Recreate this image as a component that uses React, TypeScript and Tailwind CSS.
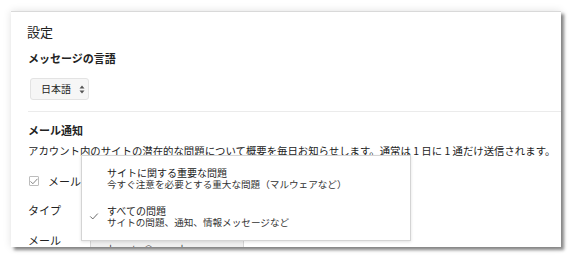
import { ChevronDown } from 'lucide-react';

const font = { fontFamily: '"Noto Sans CJK JP", "Noto Sans", sans-serif' };

function CheckMark({ className }: { className?: string }) {
  return (
    <svg className={className} viewBox="0 0 10 8" fill="none">
      <path d="M1 4.2l2.6 2.6L9 1" stroke="currentColor" strokeWidth={1} strokeLinecap="round" strokeLinejoin="round" />
    </svg>
  );
}

export default function App() {
  return (
    <div className="w-[578px] h-[264px] bg-white overflow-hidden pt-[11px] pl-[11px]" style={font}>
      <div className="relative w-[550px] h-[236px] bg-white border-t border-[#d9d9d9] shadow-[3px_3px_3px_rgba(0,0,0,0.45),0_0_8px_rgba(0,0,0,0.12)] overflow-hidden text-[#222]">
        <div className="pt-[12px] pl-[17px]">
          <h1 className="text-[13px] leading-[16px] ml-[-1px]">設定</h1>

          <p className="mt-[11px] text-[11px] leading-[14px] font-bold">メッセージの言語</p>
          <div className="mt-[13px] ml-[2px] w-[59px] h-[22px] flex items-center pl-[10px] gap-[8px] bg-[#f6f6f6] border border-[#e3e3e3] rounded-[3px]">
            <span className="text-[10px] leading-none">日本語</span>
            <svg className="w-[6px] h-[9px] text-[#555]" viewBox="0 0 6 9">
              <path d="M3 0.5L5.5 3.5H0.5Z M3 8.5L5.5 5.5H0.5Z" fill="currentColor" />
            </svg>
          </div>

          <div className="mt-[11px] h-px bg-[#ebebeb]" />

          <p className="mt-[11px] text-[11px] leading-[14px] font-bold">メール通知</p>
          <p className="mt-[7px] text-[10.4px] leading-[14px] whitespace-nowrap">
            アカウント内のサイトの潜在的な問題について概要を毎日お知らせします。通常は 1 日に 1 通だけ送信されます。
          </p>

          <div className="mt-[16px] h-[14px] flex items-center gap-[9px]">
            <span className="ml-[1px] w-[10px] h-[10px] border border-[#bdbdbd] rounded-[1px] flex items-center justify-center text-[#666]">
              <CheckMark className="w-[8px] h-[7px]" />
            </span>
            <span className="text-[11px] leading-[14px]">メール通知を受け取る</span>
          </div>

          <p className="mt-[15px] text-[11px] leading-[14px]">タイプ</p>

          <div className="mt-[16px] h-[14px] flex items-center">
            <span className="w-[62px] text-[11px] leading-[14px]">メール</span>
            <div className="mt-[18px] w-[154px] h-[22px] flex items-center justify-between px-[6px] bg-[#efefef] border border-[#d5d5d5] rounded-[2px]">
              <span className="text-[9px] text-[#444] truncate">webmaster@example.com</span>
              <ChevronDown className="w-[8px] h-[8px] text-[#444]" />
            </div>
          </div>
        </div>

        <div className="absolute left-[70px] top-[143px] w-[330px] h-[86px] bg-white border border-[#d4d4d4] shadow-[0_1px_3px_rgba(0,0,0,0.12)] pt-[11px] pl-[25px]">
          <p className="text-[10px] leading-[12px] text-[#222]">サイトに関する重要な問題</p>
          <p className="text-[9.6px] leading-[11px] text-[#333] whitespace-nowrap">今すぐ注意を必要とする重大な問題（マルウェアなど）</p>
          <p className="mt-[15px] text-[10px] leading-[12px] text-[#222]">すべての問題</p>
          <p className="text-[9.6px] leading-[11px] text-[#333] whitespace-nowrap">サイトの問題、通知、情報メッセージなど</p>
          <CheckMark className="absolute left-[7px] top-[57px] w-[10px] h-[7px] text-[#555]" />
        </div>
      </div>
    </div>
  );
}
